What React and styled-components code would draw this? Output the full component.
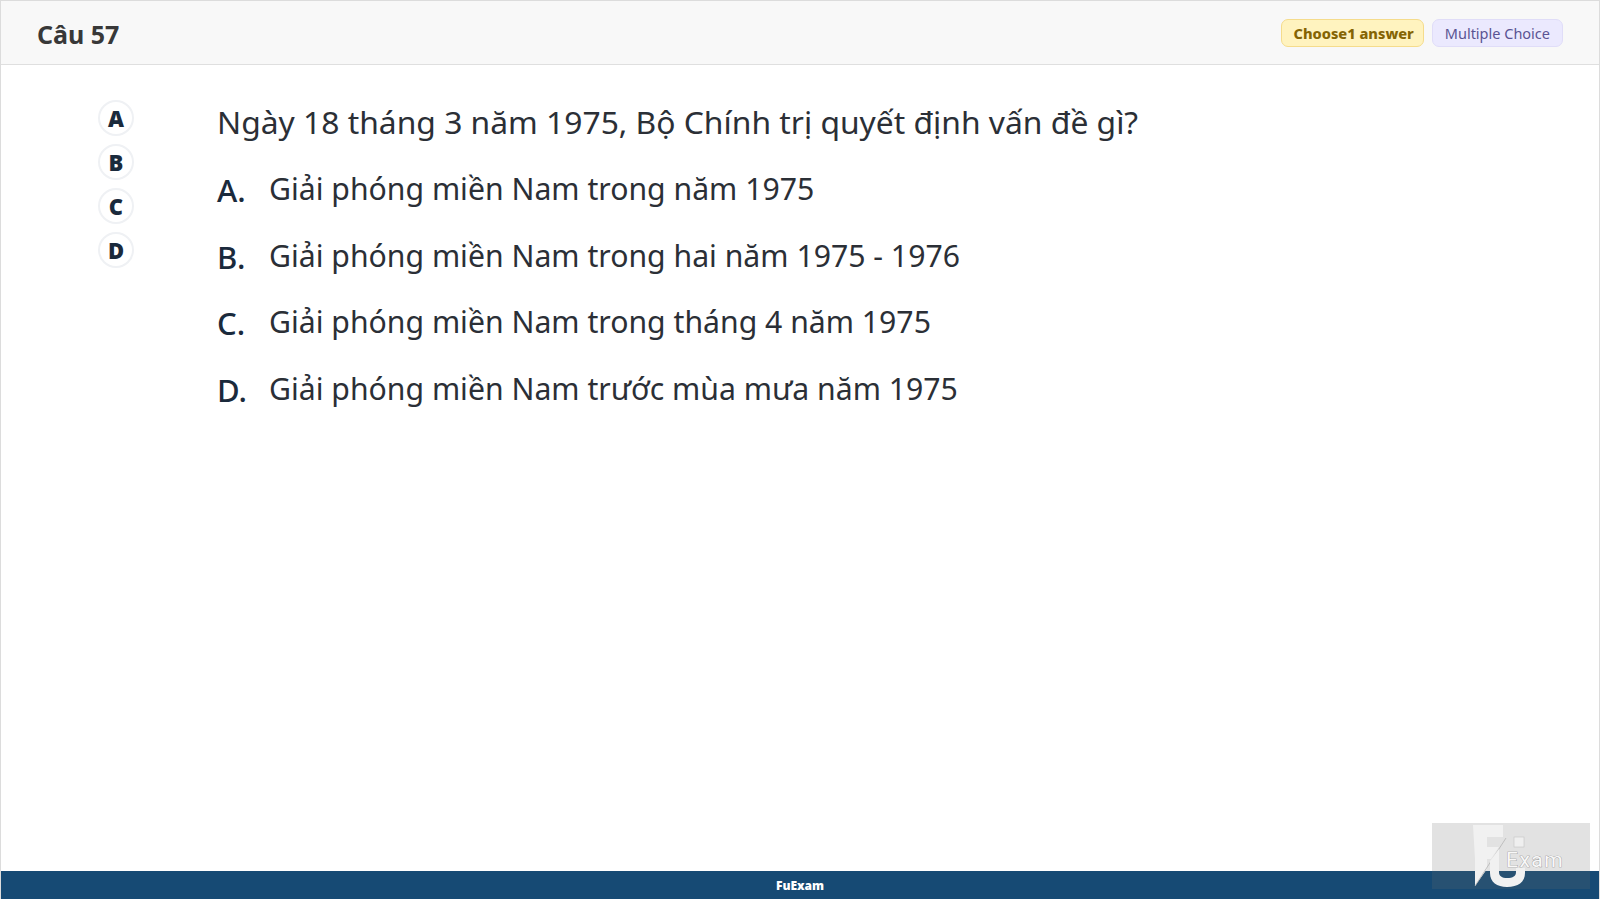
import React from 'react';
import styled, { createGlobalStyle } from 'styled-components';

const GlobalStyle = createGlobalStyle`
    html, body { margin:0; padding:0; background:#fff; }
    body { font-family:"Noto Sans", "Open Sans", sans-serif; }
    #root { width:1600px; height:900px; overflow:hidden; }
`;

const Page = styled.div`
    position:relative;
    width:1600px;
    height:900px;
    box-sizing:border-box;
    padding-bottom:1px;
    display:flex;
    flex-direction:column;
`;
const Frame = styled.div`
    flex:1;
    display:flex;
    flex-direction:column;
    border-left:1px solid #dcdcdc;
    border-right:1px solid #dcdcdc;
    border-top:1px solid #dcdcdc;
`;
const Header = styled.div`
    height:64px;
    box-sizing:border-box;
    padding:0 36px;
    display:flex;
    align-items:center;
    justify-content:space-between;
    background:#f8f8f8;
    border-bottom:1px solid #dfdfdf;
`;
const Title = styled.div`
    font-size:25px;
    font-weight:700;
    color:#383838;
    padding-top:3px;
`;
const Badges = styled.div`
    display:flex;
    gap:8px;
    margin-top:1px;
`;
const Badge = styled.div`
    height:28px;
    box-sizing:border-box;
    padding:${p => p.$bold ? '0 9px 0 12px' : '0 12px'};
    display:flex;
    align-items:center;
    border-radius:7px;
    font-size:${p => p.$bold ? 14.6 : 14.5}px;
    font-weight:${p => p.$bold ? 800 : 400};
    color:${p => p.$bold ? '#856404' : '#5a5493'};
    background:${p => p.$bold ? '#fff3bf' : '#ebe9fe'};
    border:1px solid ${p => p.$bold ? '#f5dc8c' : '#e0ddf8'};
`;
const Body = styled.div`
    flex:1;
    display:flex;
    padding-top:35px;
    padding-left:97px;
`;
const Choices = styled.div`
    width:119px;
    display:flex;
    flex-direction:column;
    gap:8px;
`;
const Choice = styled.div`
    width:36px;
    height:36px;
    box-sizing:border-box;
    border-radius:50%;
    background:#fff;
    border:2px solid #eff1f4;
    display:flex;
    align-items:center;
    justify-content:center;
    font-size:22px;
    font-weight:900;
    color:#1a2a3c;
`;
const Content = styled.div`
    display:flex;
    flex-direction:column;
`;
const Question = styled.div`
    font-size:31.8px;
    line-height:44px;
    color:#2b2f36;
    margin-bottom:23px;
`;
const Options = styled.div`
    display:flex;
    flex-direction:column;
`;
const Option = styled.div`
    height:66.7px;
    display:flex;
    align-items:flex-start;
    font-size:30.2px;
    line-height:44px;
    color:#2b2f36;
`;
const OptionLetter = styled.span`
    width:52px;
    font-size:31px;
    color:#1a2a3c;
    font-weight:500;
    position:relative;
    top:1px;
`;
const Footer = styled.div`
    height:28px;
    background:#164a74;
    display:flex;
    align-items:center;
    justify-content:center;
    color:#fff;
    font-size:12px;
    font-weight:900;
`;
const Watermark = styled.div`
    position:absolute;
    left:1432px;
    top:823px;
    width:158px;
    height:66px;
    background:rgba(110,110,110,0.2);
`;
const WatermarkLogo = styled.svg`
    display:block;
    width:158px;
    height:66px;
`;
const WatermarkLabel = styled.text`
    font-family:"Roboto", sans-serif;
    font-size:21px;
    font-weight:400;
    letter-spacing:1.5px;
    fill:#f8f8f8;
    stroke:#8f8f8f;
    stroke-width:0.7px;
    paint-order:stroke;
`;

const options = [
    ['A.', 'Giải phóng miền Nam trong năm 1975'],
    ['B.', 'Giải phóng miền Nam trong hai năm 1975 - 1976'],
    ['C.', 'Giải phóng miền Nam trong tháng 4 năm 1975'],
    ['D.', 'Giải phóng miền Nam trước mùa mưa năm 1975'],
];

function App(){
    return(
        <Page>
            <GlobalStyle/>
            <Frame>
                <Header>
                    <Title>Câu 57</Title>
                    <Badges>
                        <Badge $bold>Choose1 answer</Badge>
                        <Badge>Multiple Choice</Badge>
                    </Badges>
                </Header>
                <Body>
                    <Choices>
                        {['A','B','C','D'].map(c => <Choice key={c}>{c}</Choice>)}
                    </Choices>
                    <Content>
                        <Question>Ngày 18 tháng 3 năm 1975, Bộ Chính trị quyết định vấn đề gì?</Question>
                        <Options>
                            {options.map(([l, t]) => (
                                <Option key={l}><OptionLetter>{l}</OptionLetter>{t}</Option>
                            ))}
                        </Options>
                    </Content>
                </Body>
                <Footer>FuExam</Footer>
            </Frame>
            <Watermark>
                <WatermarkLogo viewBox="0 0 158 66">
                    <path d="M41 2H71V14H55V24H67L59 36H55V46L43 63V36Z" fill="#f1f1f1"/>
                    <path d="M74 15L43 63" stroke="#b5b5b5" strokeWidth="0.8"/>
                    <rect x="82" y="14" width="10" height="10" fill="#efefef" stroke="#c4c4c4" strokeWidth="0.6"/>
                    <path d="M58 38V50C58 59 65 64 75 64C86 64 93 59 93 50V45H84V49C84 53 81 55 75 55C70 55 67 53 67 49V26Z" fill="#f1f1f1"/>
                    <WatermarkLabel x="74" y="44">Exam</WatermarkLabel>
                </WatermarkLogo>
            </Watermark>
        </Page>
    );
}

export default App
